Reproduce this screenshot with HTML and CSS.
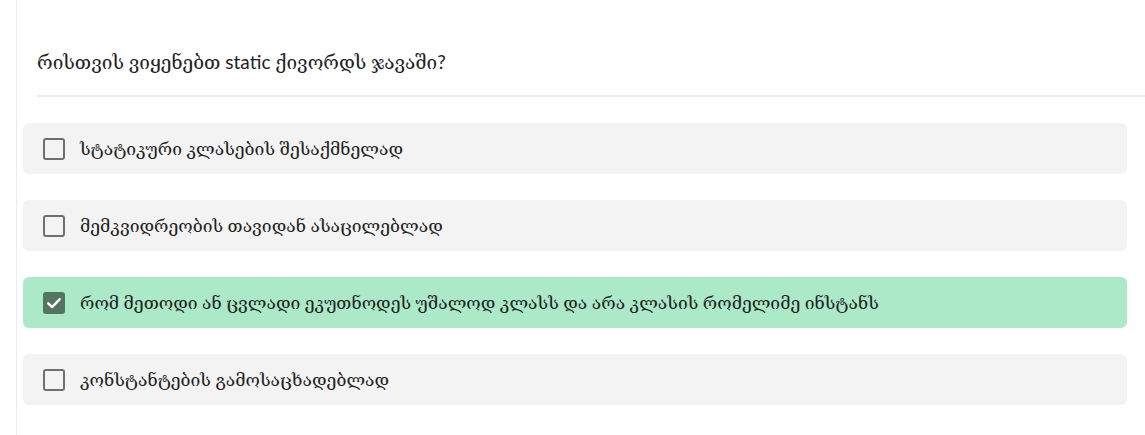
FILE: index.html
```html
<!DOCTYPE html>
<html lang="ka">
<head>
<meta charset="utf-8">
<link rel="stylesheet" href="styles.css">
</head>
<body>
<div class="page">
  <div class="question">რისთვის ვიყენებთ static ქივორდს ჯავაში?</div>
  <ul class="options">
    <li class="option">
      <span class="box"></span>
      <span class="label">სტატიკური კლასების შესაქმნელად</span>
    </li>
    <li class="option">
      <span class="box"></span>
      <span class="label">მემკვიდრეობის თავიდან ასაცილებლად</span>
    </li>
    <li class="option selected">
      <span class="box checked">
        <svg viewBox="0 0 22 22" width="22" height="22"><path d="M5.2 11.3l3.9 3.8 7.6-8" fill="none" stroke="#fff" stroke-width="2.4" stroke-linecap="round" stroke-linejoin="round"/></svg>
      </span>
      <span class="label">რომ მეთოდი ან ცვლადი ეკუთნოდეს უშალოდ კლასს და არა კლასის რომელიმე ინსტანს</span>
    </li>
    <li class="option">
      <span class="box"></span>
      <span class="label">კონსტანტების გამოსაცხადებლად</span>
    </li>
  </ul>
</div>
</body>
</html>
```
FILE: styles.css
```css
html, body {
  margin: 0;
  padding: 0;
  background: #fff;
}
body {
  font-family: Lato, "DejaVu Serif", serif;
  color: #222;
  height: 435px;
  overflow: hidden;
}
.page {
  margin-left: 16px;
  border-left: 1px solid #ececec;
  padding-left: 6px;
  padding-top: 48px;
  min-height: 435px;
  box-sizing: border-box;
}
.question {
  margin-left: 14px;
  font-size: 19px;
  line-height: 28px;
  padding-bottom: 19px;
  border-bottom: 2px solid #ececec;
  color: #222;
}
.options {
  list-style: none;
  margin: 26px 18px 0 0;
  padding: 0;
  display: flex;
  flex-direction: column;
  gap: 26px;
}
.option {
  display: flex;
  align-items: center;
  height: 51px;
  background: #f3f3f3;
  border-radius: 6px;
  padding-left: 20px;
  gap: 15px;
  font-size: 17.5px;
}
.option.selected {
  background: #abe9c8;
}
.box {
  width: 22px;
  height: 22px;
  box-sizing: border-box;
  border: 2px solid #6f6f6f;
  border-radius: 3px;
  background: #f3f3f3;
  flex: none;
  display: flex;
}
.box.checked {
  border: none;
  background: #557461;
}
.label {
  color: #222;
}
```
